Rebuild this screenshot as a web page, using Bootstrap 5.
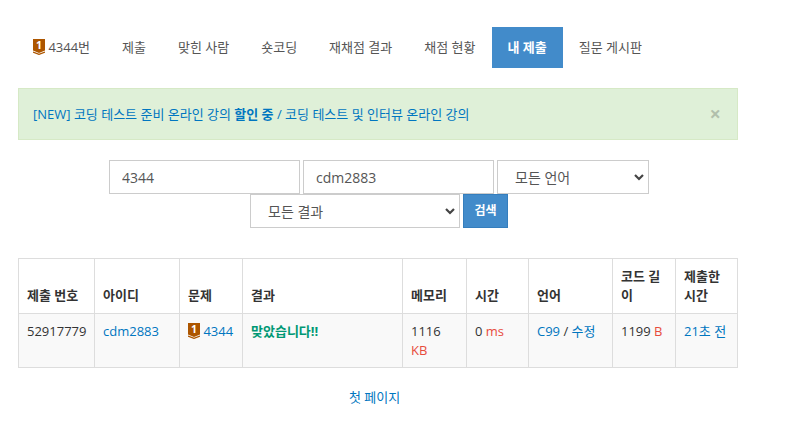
<!DOCTYPE html>
<html lang="ko">
<head>
  <meta charset="UTF-8" />
  <meta name="viewport" content="width=device-width, initial-scale=1.0"/>
  <title>채점 현황</title>
  <link href="https://cdn.jsdelivr.net/npm/bootstrap@5.3.2/dist/css/bootstrap.min.css" rel="stylesheet" />
  <style>
    body { font-family: "Open Sans", "Noto Sans CJK KR", sans-serif; font-size: 13px; line-height: 1.428; color: #333; }
    a { color: #0076c0; text-decoration: none; }
    .page-wrap { width: 720px; margin-left: 18px; padding-top: 27px; }
    .tabs .nav-link { color: #555; padding: 11px 16px; line-height: 19px; font-size: 13px; border-radius: 0; }
    .tabs .nav-item:first-child .nav-link { padding-left: 15px; }
    .tabs .nav-link.active { background: #428bca; color: #fff; font-weight: 600; }
    .notice { background: #dff0d8; border: 1px solid #d6e9c6; border-radius: 0; margin: 20px 0; padding: 15px 15px 15px 14px; height: 52px; color: #0076c0; }
    .notice-x { border: 0; background: none; padding: 0; font-size: 20px; line-height: 20px; font-weight: 700; color: #000; opacity: .2; margin-right: 1px; }
    .search-form { column-gap: 3px; margin-bottom: 30px; padding-left: 2px; }
    .search-form .form-control, .search-form .form-select { height: 34px; border: 1px solid #ccc; border-radius: 0; font-size: 14px; color: #555; padding: 6px 12px; }
    .search-form .form-select { padding-left: 17px; background-position: right 3px center; background-size: 12px 12px; background-image: url("data:image/svg+xml,%3csvg xmlns='http://www.w3.org/2000/svg' viewBox='0 0 12 12'%3e%3cpath fill='none' stroke='%23444' stroke-width='2.2' d='M2 4l4 4 4-4'/%3e%3c/svg%3e"); }
    .w-input { width: 191px; }
    .w-lang { width: 152px !important; }
    .w-result { width: 210px !important; }
    .search-btn { width: 45px; height: 34px; padding: 0; border: 1px solid #357ebd; border-radius: 0; background: #428bca; color: #fff; font-size: 12px; font-weight: 700; }
    .status-table { table-layout: fixed; width: 719px; margin-bottom: 20px; border-color: #ddd; color: #333; }
    .status-table th, .status-table td { padding: 8px; line-height: 18.57px; border: 1px solid #ddd; font-size: 13px; vertical-align: top; }
    .status-table thead th { vertical-align: bottom; font-weight: 700; padding-bottom: 9px; }
    .status-table tbody td { background: #f9f9f9; }
    .c1 { width: 76px; } .c2 { width: 85px; } .c3 { width: 63px; } .c4 { width: 160px; } .c5 { width: 64px; }
    .c6 { width: 62px; } .c7 { width: 84px; } .c8 { width: 63px; } .c9 { width: 62px; }
    .ok-text { color: #009874; font-weight: 700; }
    .unit { color: #e74c3c; }
    .tier { width: 12px; height: 16px; vertical-align: -3px; }
    .more-link { font-size: 13px; }
    .more-row { padding-right: 7px; }
  </style>
</head>
<body>

  <div class="page-wrap">
    <ul class="nav tabs">
      <li class="nav-item"><a class="nav-link" href="#"><svg class="tier" viewBox="0 0 12 16"><path fill="#ad5600" d="M0 0h12v11.5l-6 2.6-6-2.6z"/><path fill="none" stroke="#ad5600" stroke-width="1.2" d="M0 13l6 2.4 6-2.4"/><text x="6" y="10" text-anchor="middle" font-size="10.5" font-weight="700" fill="#fff" font-family="Open Sans">1</text></svg> 4344번</a></li>
      <li class="nav-item"><a class="nav-link" href="#">제출</a></li>
      <li class="nav-item"><a class="nav-link" href="#">맞힌 사람</a></li>
      <li class="nav-item"><a class="nav-link" href="#">숏코딩</a></li>
      <li class="nav-item"><a class="nav-link" href="#">재채점 결과</a></li>
      <li class="nav-item"><a class="nav-link" href="#">채점 현황</a></li>
      <li class="nav-item"><a class="nav-link active" href="#">내 제출</a></li>
      <li class="nav-item"><a class="nav-link" href="#">질문 게시판</a></li>
    </ul>

    <div class="notice d-flex justify-content-between align-items-center">
      <span><a href="#">[NEW] 코딩 테스트 준비 온라인 강의 <b>할인 중</b></a> / <a href="#">코딩 테스트 및 인터뷰 온라인 강의</a></span>
      <button type="button" class="notice-x">×</button>
    </div>

    <form class="search-form d-flex flex-wrap justify-content-center">
      <input type="text" class="form-control w-input" value="4344" />
      <input type="text" class="form-control w-input" value="cdm2883" />
      <select class="form-select w-lang"><option>모든 언어</option></select>
      <select class="form-select w-result"><option>모든 결과</option></select>
      <button type="button" class="search-btn">검색</button>
    </form>

    <table class="status-table">
      <colgroup>
        <col class="c1" /><col class="c2" /><col class="c3" /><col class="c4" /><col class="c5" /><col class="c6" /><col class="c7" /><col class="c8" /><col class="c9" />
      </colgroup>
      <thead>
        <tr>
          <th>제출 번호</th>
          <th>아이디</th>
          <th>문제</th>
          <th>결과</th>
          <th>메모리</th>
          <th>시간</th>
          <th>언어</th>
          <th>코드 길이</th>
          <th>제출한 시간</th>
        </tr>
      </thead>
      <tbody>
        <tr>
          <td>52917779</td>
          <td><a href="#">cdm2883</a></td>
          <td class="text-nowrap"><svg class="tier" viewBox="0 0 12 16"><path fill="#ad5600" d="M0 0h12v11.5l-6 2.6-6-2.6z"/><path fill="none" stroke="#ad5600" stroke-width="1.2" d="M0 13l6 2.4 6-2.4"/><text x="6" y="10" text-anchor="middle" font-size="10.5" font-weight="700" fill="#fff" font-family="Open Sans">1</text></svg> <a href="#">4344</a></td>
          <td><span class="ok-text">맞았습니다!!</span></td>
          <td>1116 <span class="unit">KB</span></td>
          <td>0 <span class="unit">ms</span></td>
          <td><a href="#">C99</a> / <a href="#">수정</a></td>
          <td>1199 <span class="unit">B</span></td>
          <td><a href="#">21초 전</a></td>
        </tr>
      </tbody>
    </table>

    <div class="text-center more-row"><a class="more-link" href="#">첫 페이지</a></div>
  </div>

  <script src="https://cdn.jsdelivr.net/npm/bootstrap@5.3.2/dist/js/bootstrap.bundle.min.js"></script>
</body>
</html>
